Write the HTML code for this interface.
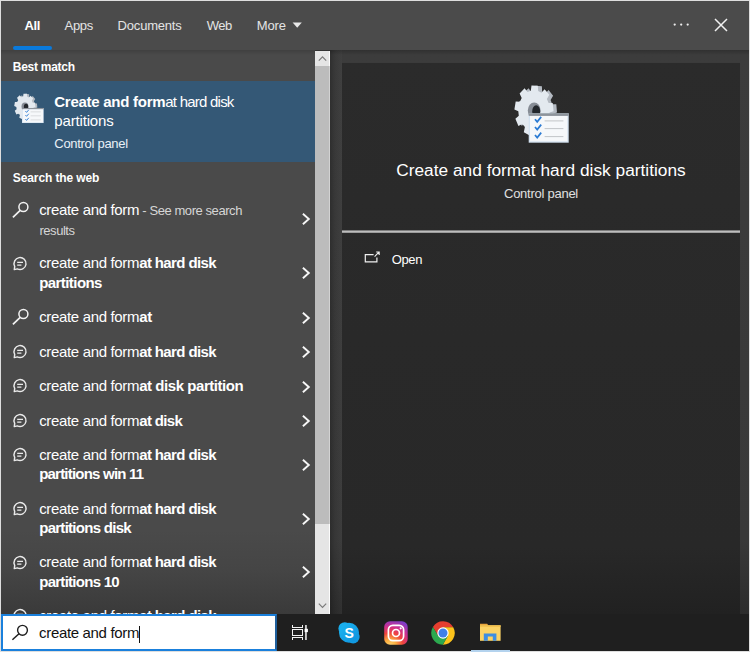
<!DOCTYPE html>
<html><head><meta charset="utf-8">
<style>
*{margin:0;padding:0;box-sizing:border-box}
html,body{width:750px;height:652px;overflow:hidden;background:#1f1f1f}
body{font-family:"Liberation Sans",sans-serif;color:#fff;position:relative}
.abs{position:absolute}
#frame{left:0;top:0;width:750px;height:652px;background:linear-gradient(#3c3c3c 50px,#393939 540px,#2c2c2c 614px)}
#gap{left:330px;top:50px;width:12px;height:564px;background:linear-gradient(to right,rgba(0,0,0,.22),rgba(0,0,0,.05) 40%,rgba(255,255,255,.02))}
#bord{left:0;top:0;width:750px;height:652px;border:1px solid #dedede;pointer-events:none}
#hdr{left:0;top:0;width:750px;height:50px;background:#4b4b4b}
#left{left:0;top:50px;width:315px;height:564px;background:linear-gradient(#4a4a4a 480px,#454545 520px,#3a3a3a 564px);overflow:hidden}
#sb{left:315px;top:51px;width:15.3px;height:563px;background:#e5e5e5;border-right:1.3px solid #fbfbfb}
#sbthumb{left:0;top:15px;width:15.3px;height:457.5px;background:#bcbcbc;border-right:1.3px solid #d2d2d2}
#right{left:342px;top:62px;width:398px;height:552px;background:linear-gradient(#3b3b3b 1px,#2b2b2b 1px,#292929 50%,#282828 88%,#212121)}
#task{left:0;top:614px;width:750px;height:38px;background:#1f1f1f}
.tab{top:18px;font-size:13px;line-height:16px;color:#e4e4e4;white-space:nowrap}
.t{white-space:nowrap;font-size:15px;line-height:20px;color:#fff}
.b{font-weight:bold}
.sec{font-size:12px;font-weight:bold;line-height:16px;white-space:nowrap}
</style></head><body>
<div id="frame" class="abs"></div>
<div id="gap" class="abs"></div>
<div class="abs" style="left:315px;top:50px;width:435px;height:5px;background:linear-gradient(rgba(0,0,0,.2),rgba(0,0,0,0))"></div>
<div id="hdr" class="abs">
 <div class="abs tab b" style="left:24.6px;color:#fff"><span style="font-size:13px;letter-spacing:-0.475px;font-weight:bold;">All</span></div><div class="abs tab" style="left:64.6px"><span style="font-size:13px;letter-spacing:-0.31px;">Apps</span></div><div class="abs tab" style="left:117.6px"><span style="font-size:13px;letter-spacing:-0.194px;">Documents</span></div><div class="abs tab" style="left:206.8px"><span style="font-size:13px;letter-spacing:-0.5px;">Web</span></div><div class="abs tab" style="left:256.8px"><span style="font-size:13px;letter-spacing:-0.156px;">More</span></div>
 <svg class="abs" style="left:292.4px;top:21px" width="11" height="8"><path d="M0.6 1.4h9.2l-4.6 5.4z" fill="#e8e8e8"/></svg>
 <div class="abs" style="left:13px;top:46px;width:39px;height:4px;border-radius:2px;background:#0a7adc"></div>
 <svg class="abs" style="left:670px;top:20px" width="22" height="9"><g fill="#eeeeee"><circle cx="4.7" cy="4.6" r="1.15"/><circle cx="11.2" cy="4.6" r="1.15"/><circle cx="17.7" cy="4.6" r="1.15"/></g></svg>
 <svg class="abs" style="left:713px;top:17px" width="16" height="16"><path d="M2 2l12 12M14 2L2 14" stroke="#f0f0f0" stroke-width="1.5" fill="none"/></svg>
</div>
<div id="left" class="abs">
 <div class="abs" style="left:0;top:0;width:315px;height:5px;background:linear-gradient(#404040,#4a4a4a)"></div>
 <div class="abs sec" style="left:12.8px;top:9px"><span style="font-size:12px;letter-spacing:-0.269px;font-weight:bold;">Best match</span></div>
 <div class="abs" style="left:0;top:31px;width:315px;height:81px;background:#345876"></div>
 <div class="abs t" style="left:54.3px;top:41.7px;line-height:20px"><span style="font-size:15px;letter-spacing:-0.269px;font-weight:bold;">Create and form</span><span style="font-size:15px;letter-spacing:-0.771px;">at hard disk</span></div><div class="abs t" style="left:54.3px;top:60.7px;line-height:20px"><span style="font-size:15px;letter-spacing:-0.158px;">partitions</span></div><div class="abs" style="left:54.3px;top:86px;font-size:13px;line-height:16px;color:#e9f0f6;white-space:nowrap"><span style="font-size:13px;letter-spacing:-0.294px;">Control panel</span></div>
 <svg class="abs" style="left:13.5px;top:43.3px" width="30.4" height="30.7" viewBox="0 0 56 60" preserveAspectRatio="none"><path d="M20.8 7.0 L21.6 1.7 L27.9 2.3 L28.1 7.6 L31.3 9.5 L34.6 6.1 L39.1 11.8 L36.6 16.1 L38.2 20.2 L42.3 20.3 L43.0 28.5 L38.9 29.7 L38.1 34.1 L41.2 37.6 L37.7 44.4 L34.0 42.0 L31.1 44.7 L31.8 50.0 L25.7 52.2 L24.1 47.3 L20.6 47.0 L18.4 51.6 L12.6 48.2 L13.8 43.1 L11.3 39.9 L7.4 41.7 L4.6 34.3 L8.1 31.4 L7.7 26.9 L3.9 24.9 L5.4 17.0 L9.5 17.6 L11.5 13.8 L9.5 9.1 L14.6 4.3 L17.4 8.2Z" fill="#b4bac2"/><path d="M16.8 6.7 L17.5 1.4 L23.8 1.7 L24.2 7.0 L27.5 8.7 L30.6 5.2 L35.3 10.7 L32.9 15.1 L34.6 19.1 L38.7 19.1 L39.6 27.2 L35.6 28.6 L34.9 33.0 L38.1 36.4 L34.7 43.4 L31.0 41.1 L28.2 43.9 L29.0 49.2 L23.0 51.7 L21.2 46.9 L17.7 46.7 L15.7 51.4 L9.8 48.3 L10.9 43.1 L8.3 40.1 L4.4 42.0 L1.4 34.7 L4.8 31.7 L4.3 27.2 L0.4 25.4 L1.7 17.4 L5.9 17.8 L7.7 14.0 L5.6 9.4 L10.6 4.3 L13.5 8.1Z" fill="#e3e9ef"/><ellipse cx="20.2" cy="26.6" rx="6.4" ry="8.2" fill="#868c95"/><ellipse cx="22.2" cy="27.6" rx="4.0" ry="6.4" fill="#23272c"/><rect x="14.7" y="29.3" width="40" height="29.4" fill="#d3e2f0"/><rect x="14.7" y="29.3" width="40" height="2.6" fill="#8e949b"/><rect x="16" y="32" width="37.4" height="25.4" fill="#f6f8fa"/><path d="M21 35.3l2.2 2.6 4-5" fill="none" stroke="#2b7bd3" stroke-width="1.7"/><path d="M30.6 36.9h18.8" stroke="#c2c5c8" stroke-width="1"/><path d="M21 43.0l2.2 2.6 4-5" fill="none" stroke="#2b7bd3" stroke-width="1.7"/><path d="M30.6 44.6h18.8" stroke="#c2c5c8" stroke-width="1"/><path d="M21 51.0l2.2 2.6 4-5" fill="none" stroke="#2b7bd3" stroke-width="1.7"/><path d="M30.6 52.6h18.8" stroke="#c2c5c8" stroke-width="1"/></svg>
 <div class="abs sec" style="left:12.8px;top:120px"><span style="font-size:12px;letter-spacing:-0.109px;font-weight:bold;">Search the web</span></div>
 <svg class="abs" style="left:11px;top:151.0px" width="20" height="20" viewBox="0 0 20 20"><circle cx="12.4" cy="6" r="4.5" fill="none" stroke="#f2f2f2" stroke-width="1.5"/><path d="M9.2 9.3L1.9 16.4" stroke="#f2f2f2" stroke-width="1.7" fill="none"/></svg>
<svg class="abs" style="left:301px;top:162.3px" width="11" height="14" viewBox="0 0 11 14"><path d="M1.9 1.8L7.8 7L1.9 12.2" fill="none" stroke="#f6f6f6" stroke-width="1.9"/></svg>
<div class="abs t" style="left:39.2px;top:150.0px;line-height:20px"><span style="font-size:15px;letter-spacing:-0.338px;">create and form</span><span style="font-size:13px;letter-spacing:-0.43px;color:#d6d6d6;"> - See more search</span></div>
<div class="abs t" style="left:39.5px;top:170.0px;line-height:20px"><span style="font-size:13px;letter-spacing:-0.471px;color:#d6d6d6;">results</span></div>
<svg class="abs" style="left:12.3px;top:205.8px" width="16" height="16" viewBox="0 0 16 16"><path d="M2.3 13.6L2.7 10.3A6 6 0 1 1 5.3 12.9Z" fill="none" stroke="#eaeaea" stroke-width="1.45" stroke-linejoin="round"/><path d="M5.2 6.4h5.8M5.2 9.1h4.2" stroke="#eaeaea" stroke-width="1.4" fill="none"/></svg>
<svg class="abs" style="left:301px;top:216px" width="11" height="14" viewBox="0 0 11 14"><path d="M1.9 1.8L7.8 7L1.9 12.2" fill="none" stroke="#f6f6f6" stroke-width="1.9"/></svg>
<div class="abs t" style="left:39.2px;top:203.0px;line-height:20px"><span style="font-size:15px;letter-spacing:-0.338px;">create and form</span><span style="font-size:15px;letter-spacing:-0.617px;font-weight:bold;">at hard disk</span></div>
<div class="abs t" style="left:39.2px;top:223.0px;line-height:20px"><span style="font-size:15px;letter-spacing:-0.564px;font-weight:bold;">partitions</span></div>
<svg class="abs" style="left:11px;top:258.4px" width="20" height="20" viewBox="0 0 20 20"><circle cx="12.4" cy="6" r="4.5" fill="none" stroke="#f2f2f2" stroke-width="1.5"/><path d="M9.2 9.3L1.9 16.4" stroke="#f2f2f2" stroke-width="1.7" fill="none"/></svg>
<svg class="abs" style="left:301px;top:261px" width="11" height="14" viewBox="0 0 11 14"><path d="M1.9 1.8L7.8 7L1.9 12.2" fill="none" stroke="#f6f6f6" stroke-width="1.9"/></svg>
<div class="abs t" style="left:39.2px;top:257.0px;line-height:20px"><span style="font-size:15px;letter-spacing:-0.338px;">create and form</span><span style="font-size:15px;letter-spacing:-0.272px;font-weight:bold;">at</span></div>
<svg class="abs" style="left:12.3px;top:293.9px" width="16" height="16" viewBox="0 0 16 16"><path d="M2.3 13.6L2.7 10.3A6 6 0 1 1 5.3 12.9Z" fill="none" stroke="#eaeaea" stroke-width="1.45" stroke-linejoin="round"/><path d="M5.2 6.4h5.8M5.2 9.1h4.2" stroke="#eaeaea" stroke-width="1.4" fill="none"/></svg>
<svg class="abs" style="left:301px;top:295.3px" width="11" height="14" viewBox="0 0 11 14"><path d="M1.9 1.8L7.8 7L1.9 12.2" fill="none" stroke="#f6f6f6" stroke-width="1.9"/></svg>
<div class="abs t" style="left:39.2px;top:292.0px;line-height:20px"><span style="font-size:15px;letter-spacing:-0.338px;">create and form</span><span style="font-size:15px;letter-spacing:-0.617px;font-weight:bold;">at hard disk</span></div>
<svg class="abs" style="left:12.3px;top:328.3px" width="16" height="16" viewBox="0 0 16 16"><path d="M2.3 13.6L2.7 10.3A6 6 0 1 1 5.3 12.9Z" fill="none" stroke="#eaeaea" stroke-width="1.45" stroke-linejoin="round"/><path d="M5.2 6.4h5.8M5.2 9.1h4.2" stroke="#eaeaea" stroke-width="1.4" fill="none"/></svg>
<svg class="abs" style="left:301px;top:329.6px" width="11" height="14" viewBox="0 0 11 14"><path d="M1.9 1.8L7.8 7L1.9 12.2" fill="none" stroke="#f6f6f6" stroke-width="1.9"/></svg>
<div class="abs t" style="left:39.2px;top:326.0px;line-height:20px"><span style="font-size:15px;letter-spacing:-0.338px;">create and form</span><span style="font-size:15px;letter-spacing:-0.446px;font-weight:bold;">at disk partition</span></div>
<svg class="abs" style="left:12.3px;top:362.8px" width="16" height="16" viewBox="0 0 16 16"><path d="M2.3 13.6L2.7 10.3A6 6 0 1 1 5.3 12.9Z" fill="none" stroke="#eaeaea" stroke-width="1.45" stroke-linejoin="round"/><path d="M5.2 6.4h5.8M5.2 9.1h4.2" stroke="#eaeaea" stroke-width="1.4" fill="none"/></svg>
<svg class="abs" style="left:301px;top:363.9px" width="11" height="14" viewBox="0 0 11 14"><path d="M1.9 1.8L7.8 7L1.9 12.2" fill="none" stroke="#f6f6f6" stroke-width="1.9"/></svg>
<div class="abs t" style="left:39.2px;top:361.0px;line-height:20px"><span style="font-size:15px;letter-spacing:-0.338px;">create and form</span><span style="font-size:15px;letter-spacing:-0.633px;font-weight:bold;">at disk</span></div>
<svg class="abs" style="left:12.3px;top:397.1px" width="16" height="16" viewBox="0 0 16 16"><path d="M2.3 13.6L2.7 10.3A6 6 0 1 1 5.3 12.9Z" fill="none" stroke="#eaeaea" stroke-width="1.45" stroke-linejoin="round"/><path d="M5.2 6.4h5.8M5.2 9.1h4.2" stroke="#eaeaea" stroke-width="1.4" fill="none"/></svg>
<svg class="abs" style="left:301px;top:407.9px" width="11" height="14" viewBox="0 0 11 14"><path d="M1.9 1.8L7.8 7L1.9 12.2" fill="none" stroke="#f6f6f6" stroke-width="1.9"/></svg>
<div class="abs t" style="left:39.2px;top:395.0px;line-height:20px"><span style="font-size:15px;letter-spacing:-0.338px;">create and form</span><span style="font-size:15px;letter-spacing:-0.617px;font-weight:bold;">at hard disk</span></div>
<div class="abs t" style="left:39.2px;top:414.0px;line-height:20px"><span style="font-size:15px;letter-spacing:-0.79px;font-weight:bold;">partitions win 11</span></div>
<svg class="abs" style="left:12.3px;top:450.8px" width="16" height="16" viewBox="0 0 16 16"><path d="M2.3 13.6L2.7 10.3A6 6 0 1 1 5.3 12.9Z" fill="none" stroke="#eaeaea" stroke-width="1.45" stroke-linejoin="round"/><path d="M5.2 6.4h5.8M5.2 9.1h4.2" stroke="#eaeaea" stroke-width="1.4" fill="none"/></svg>
<svg class="abs" style="left:301px;top:461.6px" width="11" height="14" viewBox="0 0 11 14"><path d="M1.9 1.8L7.8 7L1.9 12.2" fill="none" stroke="#f6f6f6" stroke-width="1.9"/></svg>
<div class="abs t" style="left:39.2px;top:449.0px;line-height:20px"><span style="font-size:15px;letter-spacing:-0.338px;">create and form</span><span style="font-size:15px;letter-spacing:-0.617px;font-weight:bold;">at hard disk</span></div>
<div class="abs t" style="left:39.2px;top:468.0px;line-height:20px"><span style="font-size:15px;letter-spacing:-0.722px;font-weight:bold;">partitions disk</span></div>
<svg class="abs" style="left:12.3px;top:504.5px" width="16" height="16" viewBox="0 0 16 16"><path d="M2.3 13.6L2.7 10.3A6 6 0 1 1 5.3 12.9Z" fill="none" stroke="#eaeaea" stroke-width="1.45" stroke-linejoin="round"/><path d="M5.2 6.4h5.8M5.2 9.1h4.2" stroke="#eaeaea" stroke-width="1.4" fill="none"/></svg>
<svg class="abs" style="left:301px;top:515.3px" width="11" height="14" viewBox="0 0 11 14"><path d="M1.9 1.8L7.8 7L1.9 12.2" fill="none" stroke="#f6f6f6" stroke-width="1.9"/></svg>
<div class="abs t" style="left:39.2px;top:502.0px;line-height:20px"><span style="font-size:15px;letter-spacing:-0.338px;">create and form</span><span style="font-size:15px;letter-spacing:-0.617px;font-weight:bold;">at hard disk</span></div>
<div class="abs t" style="left:39.2px;top:522.0px;line-height:20px"><span style="font-size:15px;letter-spacing:-0.722px;font-weight:bold;">partitions 10</span></div>
<svg class="abs" style="left:12.3px;top:558.2px" width="16" height="16" viewBox="0 0 16 16"><path d="M2.3 13.6L2.7 10.3A6 6 0 1 1 5.3 12.9Z" fill="none" stroke="#eaeaea" stroke-width="1.45" stroke-linejoin="round"/><path d="M5.2 6.4h5.8M5.2 9.1h4.2" stroke="#eaeaea" stroke-width="1.4" fill="none"/></svg>
<div class="abs t" style="left:39.2px;top:556.0px;line-height:20px"><span style="font-size:15px;letter-spacing:-0.338px;">create and form</span><span style="font-size:15px;letter-spacing:-0.617px;font-weight:bold;">at hard disk</span></div>
</div>
<div id="sb" class="abs"><div id="sbthumb" class="abs"></div>
 <svg class="abs" style="left:0;top:0" width="15" height="15"><path d="M3.8 9.6L7.5 5.9l3.7 3.7" fill="none" stroke="#7a7a7a" stroke-width="1.2"/></svg>
 <svg class="abs" style="left:0;top:547px" width="15" height="15"><path d="M3.8 5.6l3.7 3.7 3.7-3.7" fill="none" stroke="#7a7a7a" stroke-width="1.2"/></svg>
</div>
<div id="right" class="abs">
 <svg class="abs" style="left:172px;top:22px" width="56" height="60" viewBox="0 0 56 60" preserveAspectRatio="none"><path d="M20.8 7.0 L21.6 1.7 L27.9 2.3 L28.1 7.6 L31.3 9.5 L34.6 6.1 L39.1 11.8 L36.6 16.1 L38.2 20.2 L42.3 20.3 L43.0 28.5 L38.9 29.7 L38.1 34.1 L41.2 37.6 L37.7 44.4 L34.0 42.0 L31.1 44.7 L31.8 50.0 L25.7 52.2 L24.1 47.3 L20.6 47.0 L18.4 51.6 L12.6 48.2 L13.8 43.1 L11.3 39.9 L7.4 41.7 L4.6 34.3 L8.1 31.4 L7.7 26.9 L3.9 24.9 L5.4 17.0 L9.5 17.6 L11.5 13.8 L9.5 9.1 L14.6 4.3 L17.4 8.2Z" fill="#b4bac2"/><path d="M16.8 6.7 L17.5 1.4 L23.8 1.7 L24.2 7.0 L27.5 8.7 L30.6 5.2 L35.3 10.7 L32.9 15.1 L34.6 19.1 L38.7 19.1 L39.6 27.2 L35.6 28.6 L34.9 33.0 L38.1 36.4 L34.7 43.4 L31.0 41.1 L28.2 43.9 L29.0 49.2 L23.0 51.7 L21.2 46.9 L17.7 46.7 L15.7 51.4 L9.8 48.3 L10.9 43.1 L8.3 40.1 L4.4 42.0 L1.4 34.7 L4.8 31.7 L4.3 27.2 L0.4 25.4 L1.7 17.4 L5.9 17.8 L7.7 14.0 L5.6 9.4 L10.6 4.3 L13.5 8.1Z" fill="#e3e9ef"/><ellipse cx="20.2" cy="26.6" rx="6.4" ry="8.2" fill="#868c95"/><ellipse cx="22.2" cy="27.6" rx="4.0" ry="6.4" fill="#23272c"/><rect x="14.7" y="29.3" width="40" height="29.4" fill="#d3e2f0"/><rect x="14.7" y="29.3" width="40" height="2.6" fill="#8e949b"/><rect x="16" y="32" width="37.4" height="25.4" fill="#f6f8fa"/><path d="M21 35.3l2.2 2.6 4-5" fill="none" stroke="#2b7bd3" stroke-width="1.7"/><path d="M30.6 36.9h18.8" stroke="#c2c5c8" stroke-width="1"/><path d="M21 43.0l2.2 2.6 4-5" fill="none" stroke="#2b7bd3" stroke-width="1.7"/><path d="M30.6 44.6h18.8" stroke="#c2c5c8" stroke-width="1"/><path d="M21 51.0l2.2 2.6 4-5" fill="none" stroke="#2b7bd3" stroke-width="1.7"/><path d="M30.6 52.6h18.8" stroke="#c2c5c8" stroke-width="1"/></svg>
 <div class="abs" style="left:0;top:97px;width:398px;text-align:center;font-size:17.3px;line-height:22px;white-space:nowrap"><span style="font-size:17.3px;letter-spacing:0.01px;">Create and format hard disk partitions</span></div>
 <div class="abs" style="left:0;top:124px;width:398px;text-align:center;font-size:13px;line-height:16px;color:#e0e0e0;white-space:nowrap"><span style="font-size:13px;letter-spacing:-0.256px;">Control panel</span></div>
 <div class="abs" style="left:0;top:168px;width:398px;height:3px;background:linear-gradient(#7d7d7d 1px,#bdbdbd 1px,#bdbdbd 2px,#9c9c9c 2px)"></div>
 <svg class="abs" style="left:21px;top:188px" width="18" height="14" viewBox="0 0 18 14"><path d="M10.6 4.6H2.3v7.2h11.6V7.6" fill="none" stroke="#f0f0f0" stroke-width="1.2"/><path d="M11.6 6.6L15.9 2.2M13.2 2h3v3" fill="none" stroke="#f0f0f0" stroke-width="1.1"/></svg>
 <div class="abs" style="left:49.7px;top:190px;font-size:13px;line-height:16px;white-space:nowrap"><span style="font-size:13px;letter-spacing:-0.378px;">Open</span></div>
</div>
<div id="task" class="abs"><div class="abs" style="left:0;top:-1px">
 <div class="abs" style="left:1px;top:1px;width:276px;height:37px;background:#fff;border:2px solid #1a80dc;border-right-color:#1f5f9c"></div>
 <svg class="abs" style="left:10px;top:10px" width="20" height="20" viewBox="0 0 20 20"><circle cx="12.5" cy="7.3" r="4.9" fill="none" stroke="#1e1e1e" stroke-width="1.4"/><path d="M9 10.8L2.4 16.8" stroke="#1e1e1e" stroke-width="1.5" fill="none"/></svg>
 <div class="abs" style="left:39.1px;top:10.2px;font-size:15px;line-height:20px;color:#111;white-space:nowrap"><span style="font-size:15px;letter-spacing:-0.338px;">create and form</span></div>
 <div class="abs" style="left:139px;top:12.5px;width:1px;height:17px;background:#111"></div>

 <!-- task view -->
 <svg class="abs" style="left:290px;top:11px" width="20" height="18" viewBox="0 0 20 18"><g fill="#f2f2f2"><rect x="2" y="1" width="1" height="3"/><rect x="12" y="1" width="1" height="3"/><rect x="2" y="3" width="11" height="1"/><rect x="2" y="5" width="11" height="1"/><rect x="2" y="11" width="11" height="1"/><rect x="2" y="5" width="1" height="7"/><rect x="12" y="5" width="1" height="7"/><rect x="2" y="13" width="11" height="1"/><rect x="2" y="13" width="1" height="3"/><rect x="12" y="13" width="1" height="3"/><rect x="15.2" y="1" width="1.5" height="15"/><rect x="14.6" y="4.8" width="3.3" height="3.3" fill="#fff"/></g></svg>
 <!-- skype -->
 <svg class="abs" style="left:336px;top:6.9px" width="26" height="26" viewBox="0 0 26 26"><defs><linearGradient id="sk" x1="0" y1="0" x2="1" y2="1"><stop offset="0" stop-color="#1cb7f2"/><stop offset="1" stop-color="#0e90dd"/></linearGradient></defs><circle cx="8.8" cy="8.6" r="6.4" fill="url(#sk)"/><circle cx="17.2" cy="17" r="6.4" fill="url(#sk)"/><circle cx="13" cy="12.8" r="10" fill="url(#sk)"/><text x="13.1" y="17.8" text-anchor="middle" font-family="Liberation Sans, sans-serif" font-weight="bold" font-size="14" fill="#fff">S</text></svg>
 <!-- instagram -->
 <svg class="abs" style="left:383.6px;top:8px" width="24" height="24" viewBox="0 0 24 24"><defs><radialGradient id="ig" cx="0.25" cy="1.05" r="1.15"><stop offset="0" stop-color="#fed576"/><stop offset="0.22" stop-color="#fbb040"/><stop offset="0.48" stop-color="#f0453c"/><stop offset="0.72" stop-color="#cf2f8e"/><stop offset="1" stop-color="#7b3ec9"/></radialGradient></defs><rect x="0.2" y="0.2" width="23.5" height="23.5" rx="5.8" fill="url(#ig)"/><rect x="4.4" y="4.4" width="15.2" height="15.2" rx="4.4" fill="none" stroke="#fff" stroke-width="1.7"/><circle cx="12" cy="12" r="3.5" fill="none" stroke="#fff" stroke-width="1.7"/><circle cx="16.7" cy="7.3" r="1.1" fill="#fff"/></svg>
 <!-- chrome -->
 <svg class="abs" style="left:430.6px;top:7.5px" width="24" height="24" viewBox="-12 -12 24 24"><path d="M-10.05 -6A11.7 11.7 0 0 1 10.22 -5.7L0 -5.7L0 0L-4.94 2.85Z" fill="#e43e2f"/><path d="M10.22 -5.7A11.7 11.7 0 0 1 -0.17 11.7L4.94 2.85L0 0L0 -5.7Z" fill="#fcc31b"/><path d="M-0.17 11.7A11.7 11.7 0 0 1 -10.05 -6L-4.94 2.85L0 0L4.94 2.85Z" fill="#2ca94f"/><circle r="5.7" fill="#fff"/><circle r="4.5" fill="#3f7fe8"/></svg>
 <!-- explorer -->
 <svg class="abs" style="left:479px;top:10px" width="23" height="19" viewBox="0 0 23 19"><path d="M1 0.8h7.2l1.2 1.6H1z" fill="#e9a53c"/><rect x="1" y="2.3" width="20.6" height="15.5" fill="#fbd365"/><rect x="1" y="2.3" width="20.6" height="1.6" fill="#f3c04d"/><path d="M4.8 17.8v-7.4h12.6v7.4h-3.6v-4.2H8.8v4.2z" fill="#3d8ee2"/></svg>
 <div class="abs" style="left:471px;top:37px;width:39px;height:2px;background:#b4d3ee;z-index:5"></div>

</div></div>
<div id="bord" class="abs"></div>
</body></html>
